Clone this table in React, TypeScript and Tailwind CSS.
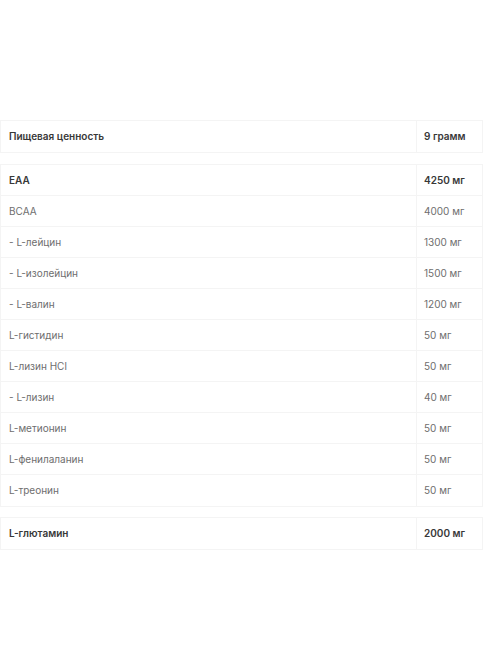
const rows: { name: string; value: string; bold?: boolean }[] = [
  { name: "EAA", value: "4250 мг", bold: true },
  { name: "BCAA", value: "4000 мг" },
  { name: "- L-лейцин", value: "1300 мг" },
  { name: "- L-изолейцин", value: "1500 мг" },
  { name: "- L-валин", value: "1200 мг" },
  { name: "L-гистидин", value: "50 мг" },
  { name: "L-лизин HCl", value: "50 мг" },
  { name: "- L-лизин", value: "40 мг" },
  { name: "L-метионин", value: "50 мг" },
  { name: "L-фенилаланин", value: "50 мг" },
  { name: "L-треонин", value: "50 мг" },
];

function Row({ name, value, bold }: { name: string; value: string; bold?: boolean }) {
  return (
    <div className="flex h-[31px] items-center border-b border-[#f4f4f4] last:border-b-0">
      <div
        className={
          bold
            ? "flex h-full w-[416px] items-center border-r border-[#f4f4f4] pl-[8px] font-semibold text-[#383838]"
            : "flex h-full w-[416px] items-center border-r border-[#f4f4f4] pl-[8px] text-[#6e6e6e]"
        }
      >
        {name}
      </div>
      <div
        className={
          bold
            ? "flex h-full flex-1 items-center pl-[7px] font-semibold text-[#383838]"
            : "flex h-full flex-1 items-center pl-[7px] text-[#6e6e6e]"
        }
      >
        {value}
      </div>
    </div>
  );
}

export default function App() {
  return (
    <div className="min-h-screen w-[483px] bg-white pt-[120px] font-['Inter',sans-serif] text-[10px]">
      <div className="border border-[#f4f4f4]">
        <Row name="Пищевая ценность" value="9 грамм" bold />
      </div>
      <div className="mt-[11px] border border-[#f4f4f4]">
        {rows.map((r) => (
          <Row key={r.name} {...r} />
        ))}
      </div>
      <div className="mt-[10px] border border-[#f4f4f4]">
        <Row name="L-глютамин" value="2000 мг" bold />
      </div>
    </div>
  );
}
